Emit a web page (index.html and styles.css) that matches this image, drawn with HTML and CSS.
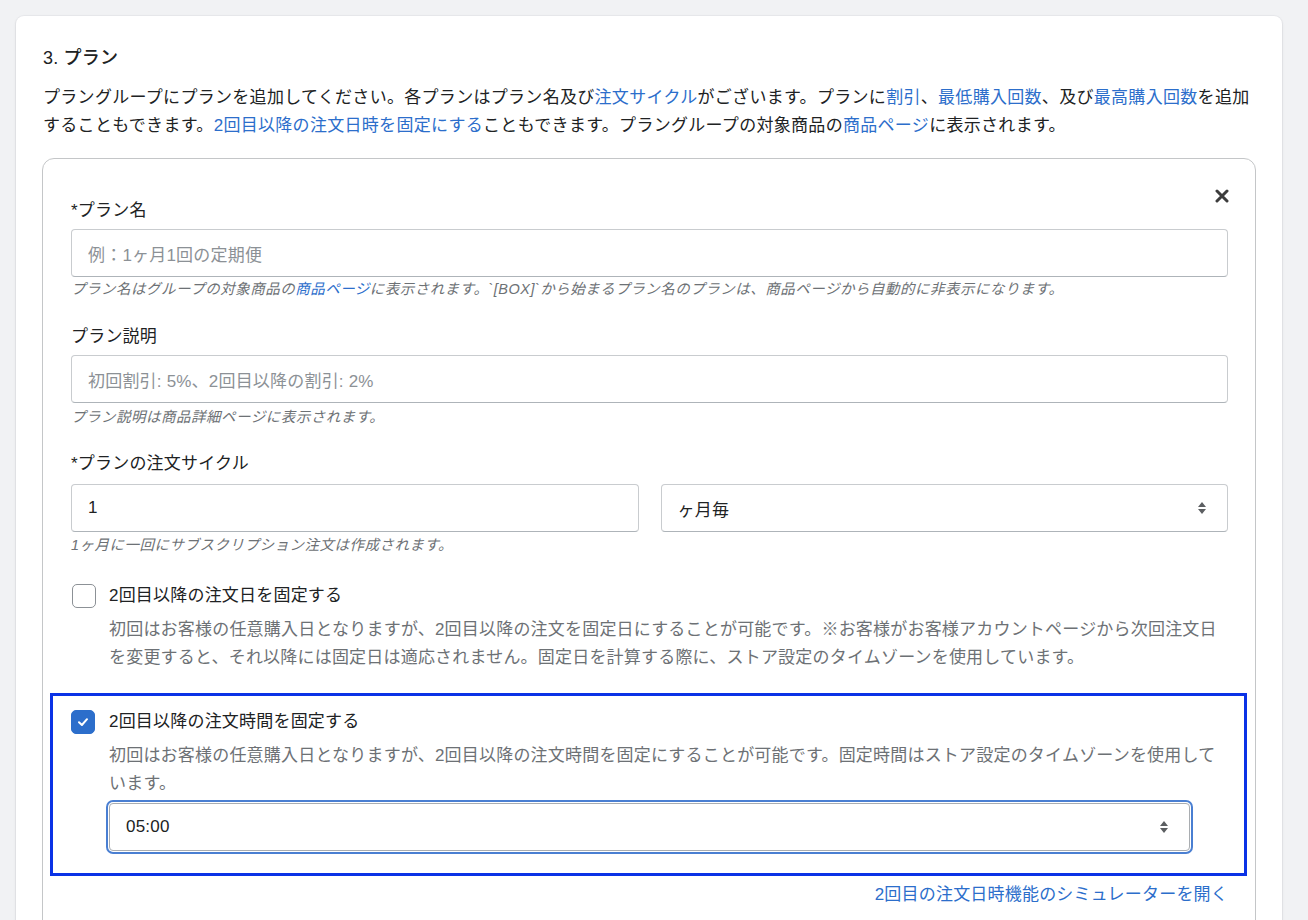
FILE: index.html
```html
<!DOCTYPE html>
<html lang="ja">
<head>
<meta charset="utf-8">
<title>プラン</title>
<link rel="stylesheet" href="styles.css">
</head>
<body>
<div class="card">
  <h2 class="title">3. プラン</h2>
  <p class="intro">プラングループにプランを追加してください。各プランはプラン名及び<a class="link">注文サイクル</a>がございます。プランに<a class="link">割引</a>、<a class="link">最低購入回数</a>、及び<a class="link">最高購入回数</a>を追加することもできます。<a class="link">2回目以降の注文日時を固定にする</a>こともできます。プラングループの対象商品の<a class="link">商品ページ</a>に表示されます。</p>

  <div class="plan">
    <button class="close" type="button" aria-label="閉じる">
      <svg width="14" height="14" viewBox="0 0 14 14"><path d="M2 2 L12 12 M12 2 L2 12" stroke="#3d3d3d" stroke-width="3" stroke-linecap="round"/></svg>
    </button>

    <div class="field">
      <div class="label">*プラン名</div>
      <div class="input placeholder">例：1ヶ月1回の定期便</div>
      <p class="help">プラン名はグループの対象商品の<a class="link">商品ページ</a>に表示されます。`[BOX]`から始まるプラン名のプランは、商品ページから自動的に非表示になります。</p>
    </div>

    <div class="field field-2">
      <div class="label">プラン説明</div>
      <div class="input placeholder">初回割引: 5%、2回目以降の割引: 2%</div>
      <p class="help help-2">プラン説明は商品詳細ページに表示されます。</p>
    </div>

    <div class="field field-3">
      <div class="label label-3">*プランの注文サイクル</div>
      <div class="row-2">
        <div class="input">1</div>
        <div class="input select">
          <span>ヶ月毎</span>
          <svg class="arrows" width="10" height="16" viewBox="0 0 10 16"><path d="M5 2 L9 7 H1 Z M5 14 L9 9 H1 Z" fill="#5c5f62"/></svg>
        </div>
      </div>
      <p class="help help-3">1ヶ月に一回にサブスクリプション注文は作成されます。</p>
    </div>

    <div class="check-block">
      <div class="check-row">
        <span class="checkbox"></span>
        <span class="check-label">2回目以降の注文日を固定する</span>
      </div>
      <p class="check-desc">初回はお客様の任意購入日となりますが、2回目以降の注文を固定日にすることが可能です。※お客様がお客様アカウントページから次回注文日を変更すると、それ以降には固定日は適応されません。固定日を計算する際に、ストア設定のタイムゾーンを使用しています。</p>
    </div>

    <div class="highlight">
      <div class="check-row">
        <span class="checkbox checked">
          <svg width="14" height="14" viewBox="0 0 14 14"><path d="M3 7.3 L5.9 10 L11 4.2" fill="none" stroke="#fff" stroke-width="2" stroke-linecap="round" stroke-linejoin="round"/></svg>
        </span>
        <span class="check-label">2回目以降の注文時間を固定する</span>
      </div>
      <div class="check-body">
        <p class="check-desc-inner">初回はお客様の任意購入日となりますが、2回目以降の注文時間を固定にすることが可能です。固定時間はストア設定のタイムゾーンを使用しています。</p>
        <div class="input select focused">
          <span>05:00</span>
          <svg class="arrows" width="10" height="16" viewBox="0 0 10 16"><path d="M5 2 L9 7 H1 Z M5 14 L9 9 H1 Z" fill="#5c5f62"/></svg>
        </div>
      </div>
    </div>

    <div class="sim">
      <a class="link">2回目の注文日時機能のシミュレーターを開く</a>
    </div>
  </div>
</div>
</body>
</html>
```

FILE: styles.css
```css
* { box-sizing: border-box; }

html, body {
  margin: 0;
  padding: 0;
}

body {
  background: #f1f2f4;
  padding: 16px 26px 0 16px;
  font-family: "Liberation Sans", "Noto Sans CJK JP", sans-serif;
  color: #202223;
  font-size: 17px;
  letter-spacing: 0.2px;
  height: 920px;
  overflow: hidden;
}

.card {
  background: #fff;
  border-radius: 8px;
  box-shadow: 0 0 0 1px rgba(63, 63, 68, 0.04), 0 1px 3px rgba(63, 63, 68, 0.12);
  padding: 28px 26px 40px 26px;
  width: 1266px;
}

.title {
  margin: 0 0 0 1px;
  font-size: 18px;
  font-weight: 500;
  line-height: 28px;
}

.intro {
  margin: 12px 0 0 1px;
  line-height: 28px;
  letter-spacing: 0.3px;
}

.link {
  color: #2c6ecb;
  text-decoration: none;
  cursor: pointer;
}

.plan {
  position: relative;
  margin-top: 18px;
  border: 1px solid #c4c6c8;
  border-radius: 12px;
  padding: 38px 27px 30px 28px;
}

.close {
  position: absolute;
  top: 30px;
  right: 26px;
  width: 14px;
  height: 14px;
  padding: 0;
  border: 0;
  background: none;
  display: flex;
}

.label {
  line-height: 28px;
  margin-bottom: 4px;
}

.label-3 { margin-bottom: 6px; }

.input {
  height: 48px;
  border: 1px solid #c9cccf;
  border-bottom-color: #aeb4b9;
  border-radius: 4px;
  padding: 0 16px;
  display: flex;
  align-items: center;
  font-size: 17px;
  background: #fff;
}

.placeholder { color: #8c9196; }

.select {
  justify-content: space-between;
  padding-right: 20px;
}

.arrows { display: block; }

.help {
  margin: 2px 0 0 0;
  font-size: 14.5px;
  letter-spacing: 0.5px;
  line-height: 20px;
  font-style: italic;
  color: #6d7175;
}

.help-2 { margin-top: 4px; }
.help-3 { margin-top: 3px; }

.field-2 { margin-top: 24px; }
.field-3 { margin-top: 23px; }

.row-2 {
  display: grid;
  grid-template-columns: 1fr 1fr;
  gap: 22px;
}

.check-block { margin-top: 27px; }

.check-row {
  display: flex;
  align-items: center;
  height: 28px;
  gap: 13px;
}

.checkbox {
  width: 24px;
  height: 24px;
  border: 1.5px solid #8c9196;
  border-radius: 5px;
  background: #fff;
  display: flex;
  align-items: center;
  justify-content: center;
  flex: none;
  margin-left: 1px;
  margin-right: 0;
}

.checkbox.checked {
  background: #2c6ecb;
  border-color: #2c6ecb;
  margin-left: 0;
  margin-right: 1px;
}

.check-label { line-height: 28px; }

.check-desc {
  margin: 6px 0 0 0;
  padding-left: 38px;
  line-height: 28px;
  color: #6d7175;
}

.highlight {
  margin: 21px -19px 0 -21px;
  border: 3px solid #0a32e6;
  padding: 12px 19px 22px 18px;
}

.check-body { padding-left: 38px; }

.check-desc-inner {
  margin: 6px 0 0 0;
  line-height: 28px;
  color: #6d7175;
}

.focused {
  margin-top: 5px;
  margin-right: 35px;
  border-color: #a9adb1;
  box-shadow: 0 0 0 1px #fff, 0 0 0 3px #4a7fd2;
}

.sim {
  margin-top: 5px;
  text-align: right;
  line-height: 28px;
}
```
